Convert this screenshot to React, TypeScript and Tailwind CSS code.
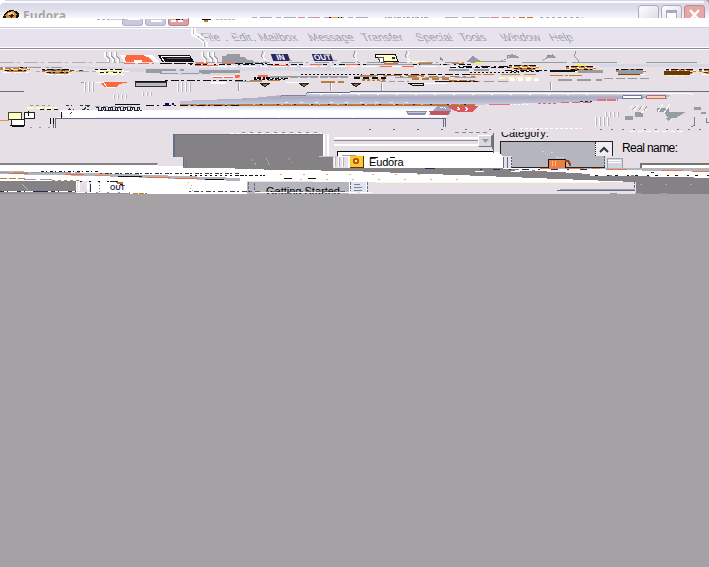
import React from "react";

// x start, x end, y, colour, dash pattern, thickness
type Seg = [number, number, number, string, string?, number?];
const K = "#111115", O = "#ff6642", G = "#969ca2", W = "#ffffff", B = "#c07b36", N = "#636d8b", Y = "#ffffbd";

function Segs({ items }: { items: Seg[] }) {
  return (
    <>
      {items.map(([a, b, y, c, d, w], i) => (
        <path key={i} d={`M${a} ${y + 0.5}H${b}`} stroke={c} strokeWidth={w || 1} strokeDasharray={d} fill="none" />
      ))}
    </>
  );
}

function Art({ y, h, children }: { y: number; h: number; children: React.ReactNode }) {
  return (
    <svg className="pointer-events-none absolute inset-0 block" width="709" height={h} viewBox={`0 ${y} 709 ${h}`} shapeRendering="crispEdges">
      {children}
    </svg>
  );
}

function Ticks({ x, y, n, h = 10, gap = 4 }: { x: number; y: number; n: number; h?: number; gap?: number }) {
  return (
    <>
      {Array.from({ length: n }, (_, i) => (
        <g key={i}>
          <path d={`M${x + i * gap + 0.5} ${y}v${h}`} stroke="#fff" />
          <path d={`M${x + i * gap + 1.5} ${y}v${h}`} stroke="#b5b3bd" />
        </g>
      ))}
    </>
  );
}

function TitleBar() {
  return (
    <header className="relative flex h-[18px] items-start justify-between overflow-hidden rounded-tr-md bg-linear-to-b from-[#d4d4e4] via-[#dedeeb] to-[#f8f8fc]">
      <div className="flex pt-[9px] pl-[3px]">
        <svg width="17" height="14" viewBox="0 0 17 14" shapeRendering="crispEdges">
          <path d="M1 6 4 2 8 1 13 2 16 5 15 11 10 14 3 12 0 9Z" fill="#211200" />
          <path d="M2 6 5 3 10 2 14 5 12 11 5 11Z" fill="#ce8a4a" />
          <path d="M4 5 8 3 12 5 9 7Z" fill="#ffcf94" />
          <path d="M6 6 9 5 11 7 8 9Z" fill="#3a1c00" />
        </svg>
        <span className="pl-[3px] font-['Open_Sans',sans-serif] text-[12px] leading-[14px] font-bold tracking-[0.15px] text-[#a5a5a8]">Eudora</span>
      </div>
      <div className="flex gap-[2px] pt-[5px] pr-[4px]">
        <span className="h-[19px] w-[21px] rounded-[3px] border border-[#a9a9bd] bg-linear-to-br from-white to-[#d7d7e5]" />
        <span className="h-[19px] w-[21px] rounded-[3px] border border-[#a9a9bd] bg-linear-to-br from-white to-[#d7d7e5] pt-[4px] pl-[4px]">
          <span className="block h-[11px] w-[11px] border border-t-[3px] border-[#aaaabd] bg-white" />
        </span>
        <span className="h-[19px] w-[21px] rounded-[3px] border border-[#bd8a94] bg-[#e5a6a6]">
          <svg width="19" height="17"><path d="m5 4 9 10M14 4 5 14" stroke="#fff" strokeWidth="2.4" /></svg>
        </span>
      </div>
      <Art y={0} h={18}>
        <path d="M3 1.5H704" stroke="#f9f9ff" strokeWidth="2" />
        <path d="M0 0h5L0 5ZM704 0h5v5Z" fill="#fff" />
        <Segs items={[[252, 370, 17, "#a7afc4", "5 3 12 4"], [298, 322, 17, "#d88b94", "6 9"], [329, 342, 17, K, "4 2"], [331, 338, 17, "#f1a335"], [385, 428, 17, "#a9a9b2", "2 1 4 2"], [445, 490, 17, "#b3b3bd", "13 4"], [491, 515, 17, "#d88b94", "8 3"], [519, 533, 17, B, "6 2"], [540, 583, 17, "#a9a9b2", "3 3"]]} />
      </Art>
    </header>
  );
}

function GhostButtons() {
  return (
    <div className="relative flex h-[9px] gap-[2px] bg-white pl-[122px]">
      <span className="h-[8px] w-[21px] rounded-b-[3px] border border-t-0 border-[#b0b0c8] bg-[#c9c9dd]" />
      <span className="h-[8px] w-[21px] rounded-b-[3px] border border-t-0 border-[#b0b0c8] bg-[#c9c9dd]" />
      <span className="h-[8px] w-[21px] rounded-b-[3px] border border-t-0 border-[#b8848e] bg-[#dda0a2]" />
      <Art y={18} h={9}>
        <path d="M122 18h66v1h-66Z" fill="#fff" />
        <Segs items={[[97, 126, 19, "#ada9bd", "3 2"], [109, 122, 19, "#ccccdf"], [128, 140, 19, W], [151, 162, 20, W, undefined, 2], [171, 185, 20, W, "5 2", 2], [176, 183, 19, K, "4 2"], [202, 211, 19, K], [204, 208, 20, B, undefined, 2], [216, 235, 19, "#b5b5ba", "3 1"]]} />
      </Art>
    </div>
  );
}

const menus: [string, string][] = [
  ["File", "w-[30px]"], ["Edit", "w-[27px]"], ["Mailbox", "w-[50px]"], ["Message", "w-[53px]"],
  ["Transfer", "w-[54px]"], ["Special", "w-[44px]"], ["Tools", "w-[41px]"], ["Window", "w-[49px]"], ["Help", "w-[30px]"],
];

function MenuBar() {
  return (
    <nav className="relative flex h-[23px] overflow-hidden border-t border-[#cecddb] bg-[#e6e3ef] pt-[1px] pl-[203px]">
      {menus.map(([m, w]) => (
        <span key={m} className={`${w} shrink-0 skew-x-[28deg] font-['Liberation_Sans',sans-serif] text-[11px] leading-[16px] text-[#a39f9f]`}>{m}</span>
      ))}
      <Art y={28} h={22}>
        <path d="M0 28.500H190M0 47.500H202" stroke="#fff" />
        <path d="M191.500 28V33L194 36 200 39 204 43V50M195 28v5l7 4 5 6v7" stroke="#fff" strokeWidth="2" fill="none" />
        <path d="M193.500 29v5M197 36l7 5 1 8" stroke="#b6b4bf" fill="none" />
        <Segs items={[[203, 577, 34, "#e6e3ef", "3 5 2 4"], [203, 577, 39, "#e6e3ef", "2 6 4 3"], [203, 577, 41, "#e6e3ef", "5 4 2 7"], [226, 578, 40, "#b5b2aa", "2 26"], [0, 709, 47, W], [0, 709, 48, "#848b90"], [0, 709, 49, W]]} />
      </Art>
    </nav>
  );
}

function ToolBar() {
  return (
    <div className="relative flex h-[13px] overflow-hidden bg-[#e6dfe6] pt-[4px]">
      <span className="ml-[272px] h-[7px] w-[17px] skew-x-[20deg] overflow-hidden bg-[#292961] text-center font-['Liberation_Sans',sans-serif] text-[8px] leading-[7px] font-bold text-white">IN</span>
      <span className="ml-[24px] h-[7px] w-[19px] skew-x-[20deg] overflow-hidden bg-[#292961] text-center font-['Liberation_Sans',sans-serif] text-[8px] leading-[7px] font-bold text-white">OUT</span>
      <Art y={50} h={13}>
        {[105, 110, 115, 202, 208, 213].map((x) => (
          <g key={x} fill="none"><path d={`M${x} 52v4l3 3v4`} stroke="#fff" strokeWidth="2" /><path d={`M${x + 1.5} 52v4l3 3v4`} stroke="#a6a4aa" /></g>
        ))}
        <path d="M120 55H152L160 62H124Z" fill="#fff" />
        <path d="M126 55H143L150 58 153 62H126l-1-3Z" fill="#ff6642" /><path d="M134 60h8v3h-8Z" fill="#fff" />
        <path d="M158 55H190L194 62H162Z" fill="#111" /><path d="M161 56.500H190M161 57l4 5" stroke="#fff" /><path d="M166 58h24v1h-23Z" fill="#53565a" />
        <path d="M222 56h3l2-2h13v3h4l3 3h5l4 3H222Z" fill="#969ca2" />
        {[262, 354, 406, 575].map((x) => <path key={x} d={`M${x} 51v3l-1 2 2 2 2 2v2`} stroke="#96949a" fill="none" />)}
        {[264, 356, 408].map((x) => <path key={x} d={`M${x} 52v3l-1 2 3 4`} stroke="#fff" fill="none" />)}
        <path d="M375 54h20l3 7h-18l-1-4h-4Z" fill="#ffffbd" stroke="#111" /><path d="M378 57h5v5h-3Z" fill="#fff" stroke="#555" /><path d="M392 57h3v2h-3Z" fill="#292979" />
        <path d="m466 62 7-6 9 6ZM495 62l15-4h10l-3-2-6-2-5 6ZM540 62l8-4h8l-3-4-6 3Z" fill="#969ca2" />
        <path d="M507 58v-3h3m37 2v-2h3m-110 5v-3l3 4" stroke="#858b90" fill="none" />
        <Segs items={[[289, 292, 60, G], [333, 337, 60, G], [0, 125, 62, "#b4b2b7", "14 3 3 4"], [195, 270, 62, G, "9 2"], [289, 475, 62, G, "14 3 2 7"], [407, 426, 61, Y], [474, 506, 61, G], [522, 620, 62, G, "45 5"], [646, 697, 62, G]]} />
      </Art>
    </div>
  );
}

function SmearedIcons() {
  const cups = [[0, 67], [42, 69], [95, 69], [509, 65], [566, 66], [616, 69], [666, 69], [699, 69]];
  return (
    <div className="relative h-[29px] bg-[#e6dfe6]">
      <Art y={63} h={29}>
        <path d="M0 66H65L145 68H235V75H182L64 67H0ZM235 65H348V71H235ZM590 64h119v3H602Z" fill="#d9d7e3" />
        {cups.map(([x, y], i) => (
          <g key={x}>
            <path d={`M${x} ${y + 1}h6l3-1h16l5 2h4v1h-6l-3 2H${x + 8}l-5-2h-3Z`} fill={i === 2 ? Y : "#c27d3c"} />
            <Segs items={[[x, x + 30, y, K, "3 2 7 3"], [x + 3, x + 34, y + 1, W, "2 6"], [x + 3, x + 34, y + 2, i === 2 ? W : "#ffda9b", "6 3"], [x + 5, x + 29, y + 3, i > 4 ? "#673300" : K, "4 2 2 5"], [x + 3, x + 29, y + 5, W, "8 3"]]} />
          </g>
        ))}
        <Segs items={[
          [124, 154, 63, O, "11 3", 1], [160, 193, 63, K, "12 2"], [196, 208, 63, O], [222, 241, 63, O],
          [190, 475, 64, K, "2 3 6 2 4 7"], [200, 475, 66, W, "7 4 16 3"], [310, 393, 64, O, "12 24"], [380, 424, 66, O, "12 10"],
          [271, 289, 65, O], [195, 218, 65, O], [235, 267, 63, K, "8 2"], [384, 464, 63, B, "14 20"], [366, 450, 64, G, "20 7"],
          [450, 510, 67, K, "6 3 5 2"], [458, 510, 66, K, "2 3 9 4"], [449, 489, 69, G, "20 5", 2], [475, 483, 63, "#ffff00"], [576, 585, 64, "#ffff00"],
          [0, 62, 67, G, "3 2 13 5"], [36, 122, 71, "#a2b3c0", "4 8 13 3"], [104, 124, 71, "#eeee70", "2 3"], [146, 184, 69, G, "30 4", 2], [146, 162, 71, G, undefined, 2],
          [199, 240, 71, G, undefined, 3], [160, 210, 73, G, "18 3"], [43, 88, 70, "#654500", "4 5"],
          [212, 238, 76, W], [213, 239, 77, O, "9 2"], [235, 272, 75, O, "5 18 10 5", 2], [278, 300, 76, O],
          [254, 289, 77, K, "2 1 4 2", 2], [254, 286, 79, K, "3 2 2 1"], [270, 350, 76, G, "8 2", 2], [294, 387, 76, G, "22 8"], [301, 362, 74, K, "2 2"],
          [354, 386, 77, K, "6 3", 2], [360, 424, 75, B, "18 5"], [362, 387, 79, B, "3 2", 2], [365, 385, 79, "#ffbd73", "3 4", 1], [370, 475, 74, K, "4 3 8 2"],
          [395, 476, 77, G, "24 6"], [412, 450, 78, B, "7 3", 2], [400, 475, 76, B, "3 5 9 4"], [449, 475, 80, "#b86e26", "8 2", 2], [470, 519, 72, K, "2 2"],
          [470, 495, 74, B, "11 2"], [501, 536, 74, "#bf8b52", "19 4"], [550, 582, 75, B, "13 2 3 1"], [505, 601, 70, K, "7 2 3 3"], [511, 540, 71, K, "3 2"],
          [550, 575, 70, K, undefined, 2], [578, 603, 71, G, undefined, 3], [618, 643, 71, G, undefined, 4], [618, 640, 74, "#844100"],
          [664, 690, 72, "#6c3608", undefined, 4], [667, 684, 75, Y, "5 2"], [604, 649, 78, G, "9 3"], [558, 602, 79, G, "14 5", 2],
          [499, 537, 77, Y, "6 3", 2], [510, 540, 79, W, "5 3", 2], [470, 510, 81, G, "10 4"],
          [435, 478, 81, K, "17 2"], [415, 447, 83, W], [250, 286, 80, B, "12 6"], [321, 344, 81, B, "14 3", 2], [380, 409, 81, G, "6 3"],
          [235, 262, 81, G], [286, 309, 82, W], [135, 167, 81, K], [165, 246, 80, K, "3 3 8 2"], [211, 226, 82, W, undefined, 2],
          [81, 84, 82, G], [0, 24, 91, N],
        ]} />
        <path d="M99 82H129L120 84 116 87H104Z" fill="#ff6642" /><path d="M95 82h8l4 5h8" stroke="#fff" fill="none" />
        <path d="M135 82h31v4h-31Z" fill="#b9b7bf" stroke="#333" />
        <Ticks x={84} y={82} n={3} /><Ticks x={177} y={82} n={4} />
        {[260, 299, 351].map((x) => <path key={x} d={`M${x} 83h10l-4 3h-2Z`} fill="#9b622c" stroke="#222" />)}
        <path d="M408 83h15v2h-11Z" fill="#ffda9b" stroke="#111" />
        {[238, 330, 381, 550].map((x) => <g key={x}><path d={`M${x}.500 ${x === 550 ? 82 : 83}v8`} stroke="#9b999f" /><path d={`M${x + 1.5} 83v7`} stroke="#fff" /></g>)}
        <path d="M350 91.500H709" stroke="#636d8b" />
      </Art>
    </div>
  );
}

function TornWindow() {
  return (
    <div className="relative h-[40px] bg-[#e6dfe6]">
      <Art y={92} h={40}>
        <defs>
          <linearGradient id="steel" x1="0" y1="0" x2="0" y2="1"><stop offset="0" stopColor="#dedde9" /><stop offset=".35" stopColor="#a9aac1" /><stop offset="1" stopColor="#c9cbdf" /></linearGradient>
          <linearGradient id="sheet" x1="0" y1="0" x2="0" y2="1"><stop offset="0" stopColor="#cdd2e3" /><stop offset=".5" stopColor="#fff" /><stop offset="1" stopColor="#fff" /></linearGradient>
        </defs>
        <path d="M306 95.500V93.500L308 92.500H350" stroke="#636d8b" fill="none" />
        <path d="M305 96V94l5-1H664l7 3-4 1-55 2-24 3-88 2-30 1H180V101l74-3 26-3Z" fill="url(#steel)" />
        <path d="M309 93.500H690L694 95" stroke="#fff" fill="none" />
        <path d="M280 97l2-2h24" stroke="#7e829e" fill="none" />
        <path d="M180 105H470V107L446 109V117H66L60 114V110H180Z" fill="url(#sheet)" />
        <Segs items={[
          [180, 475, 104, B, "17 2 8 1"], [190, 475, 105, "#b77539"], [260, 475, 104, "#282d3c", "2 15"], [285, 420, 102, "#eeeef8", "3 12"], [320, 600, 94, W, "2 17"],
          [146, 240, 105, K, "8 3 2 4"], [98, 142, 110, "#292929", "3 3"], [95, 135, 106, G, "5 3"], [115, 140, 104, K],
          [165, 174, 103, "#000b79", "4 3", 2], [30, 50, 105, G, "3 3"], [27, 57, 107, Y, "7 2", 2], [40, 61, 109, K, "4 3"],
          [489, 510, 104, "#e37078"], [510, 530, 104, W, "2 2"], [538, 558, 103, "#d66974", "3 2"], [561, 593, 102, "#d66974", "8 3"], [580, 592, 101, "#252b44", "3 2"],
          [597, 618, 99, "#e37078", "9 1", 2], [57, 442, 117, W], [55, 446, 118, N], [95, 440, 117, "#f0edf4", "35 2"],
        ]} />
        {[96, 103, 110, 118, 125, 132].map((x) => <path key={x} d={`M${x} 107h2v3h3v-3l3 1-1 2h-2`} stroke="#1e2436" fill="none" />)}
        <path d="M66 105h6l-3 4h5l-4 5M80 105h10l-6 4h5" stroke="#343642" strokeDasharray="3 2" fill="none" />
        <path d="M53.500 119V128M55.500 119v9M443.500 118V127M445.500 118v9" stroke="#636d8b" />
        <path d="M406 111h21l-2 4h-17Z" fill="#888caf" /><path d="M408 112h17" stroke="#c2c5dd" />
        <path d="m429 115 3-4 5-5h14v5l-2 4Z" fill="#9ea3bb" /><path d="M429 111h21l-2 4h-17Z" fill="#c55462" />
        <path d="M447 106h31l-5 6h-15l-5-2Z" fill="#dc5660" /><path d="m457 107 3 2-3 1m8-3 3 2-3 2m-25-3 4-1 2 2" stroke="#fff" strokeDasharray="3 1" fill="none" />
        <path d="M622 98c0-3 2-3 4-3h13c2 0 3 1 3 3Z" fill="#fff" stroke="#71799a" /><path d="M646 98c0-3 2-3 4-3h13c2 0 3 1 3 3Z" fill="#ffd1ac" stroke="#b46c76" />
        <path d="M8 112h13v7H8Z" fill="#ffffbd" stroke="#444" /><path d="M24 112h10v6H24ZM11 119h13v6H11Z" fill="#fff" stroke="#222" /><path d="M10 125h15M28 111v5M50 118v6m3-6v6M61 112v6" stroke="#111" /><path d="M0 120h9" stroke="#e09645" />
        <Ticks x={142} y={92} n={3} h={4} /><Ticks x={113} y={95} n={4} h={4} />
        <Ticks x={595} y={117} n={4} h={9} /><Ticks x={605} y={112} n={4} h={5} />
        <path d="M625 116h8v4h-8Zm10-4h8v5h-8Zm22-4h12v4h-12Zm7 4h22l-10 6h-8Zm2 6h5l-3 3Zm28-11h7v3h-7Zm7 5h5v2h-5Z" fill="#969ca2" />
        <path d="m629 109 4-4m1 6 4-6m1 6 5-6m-3 8 6-4m16-5-5 8m12-8-6 9" stroke="#fff" />
        <path d="m632 110 4-4m2 5 4-5m2 5 3-5" stroke="#aaa8ae" />
        <path d="M694.500 117v8l-3 2M706 118v4h3" stroke="#77808c" fill="none" />
        <Segs items={[[369, 560, 129, "#636d8b", "2 22"], [520, 582, 128, W, "3 2"], [600, 709, 129, "#727785", "2 9"], [12, 24, 126, K], [30, 55, 127, G, "2 7"], [630, 684, 131, W, "5 3"]]} />
      </Art>
    </div>
  );
}

function Panels() {
  return (
    <section className="relative flex h-[36px] overflow-hidden bg-[#e6dfe6] font-['Liberation_Sans',sans-serif]">
      <div className="mt-[31px] h-[5px] w-[158px] border-t-2 border-r border-[#848284] border-r-white bg-white" />
      <div className="ml-[15px] mt-[2px] h-[34px] w-[151px] border-t border-l border-[#636d8b] border-t-[#77736e] bg-[#848284]" />
      <div className="ml-[10px] flex w-[159px] flex-col">
        <div className="mt-[3px] flex h-[14px] items-start justify-between border-r border-[#77757a]">
          <div className="mt-[2px] h-[9px] flex-1 border-y-2 border-t-white border-b-white"><div className="h-[2px] border-b border-[#8d8a91]" /></div>
          <div className="flex h-[12px] w-[14px] items-center justify-center border border-t-white border-l-white border-r-[#77757a] border-b-[#77757a] bg-[#dad7dd]">
            <svg width="7" height="4"><path d="M0 0h7L3.500 4Z" fill="#969ca2" /></svg>
          </div>
        </div>
        <div className="mt-[2px] ml-[3px] flex h-[17px] border-t border-l border-black bg-white pt-[4px] pl-[12px]">
          <svg className="shrink-0" width="14" height="12" shapeRendering="crispEdges"><path d="M0 0h13v11H0Z" fill="#ffc62d" /><path d="M13 0v11H0" stroke="#5b3415" fill="none" /><circle cx="6" cy="5" r="3" fill="#b75b10" /><path d="M5 4h2v2H5Z" fill="#fff1a0" /></svg>
          <span className="ml-[5px] text-[11px] leading-[12px] tracking-[-0.15px] text-black">Eudora</span>
        </div>
      </div>
      <div className="ml-[7px] flex w-[113px] flex-col">
        <span className="-mt-[6px] h-[15px] pl-[1px] text-[11px] leading-[14px] text-black">Category:</span>
        <div className="mt-[1px] flex h-[27px] border border-[#222] bg-[#b5b5bd]">
          <div className="flex-1 pt-[16px] pl-[46px]">
            <svg width="25" height="10" shapeRendering="crispEdges"><path d="M1 1h17v9H1Z" fill="#e98143" stroke="#111" /><path d="M18 3h3l2 3v2" stroke="#9b3e16" strokeWidth="2" fill="none" /><path d="M5 3v5M8 3v5" stroke="#ffc099" /></svg>
          </div>
          <div className="flex h-[14px] w-[17px] items-center justify-center border-l border-dotted border-[#222] bg-[#efedf3]"><svg width="10" height="7"><path d="m1 6 4-4 4 4" stroke="#333" strokeWidth="2" fill="none" /></svg></div>
        </div>
      </div>
      <div className="flex flex-1 flex-col pl-[9px]">
        <span className="mt-[9px] h-[15px] whitespace-nowrap text-[12px] leading-[15px] tracking-[-0.6px] text-black">Real name:</span>
        <div className="mt-[7px] ml-[18px] h-[6px] border-t-2 border-l-2 border-[#77736e] bg-white" />
      </div>
      <Art y={132} h={36}>
        <path d="M171 134h2v23h10v11h-12Z" fill="#e6dfe6" />
        <path d="M174.500 134v23M183.500 157v10" stroke="#636d8b" /><path d="M186.500 158v9" stroke="#77787f" />
        <path d="M323 134h2v22h-2ZM327 134h2v22h-2ZM493 152h6l4 5v11h-10Z" fill="#fff" /><path d="M493.500 133v20" stroke="#636d8b" />
        <path d="M158 166h25v2h-25Z" fill="#fff" />
        <path d="M323 156h11v12h-11Z" fill="#848284" /><path d="M333 157h15v11h-15Z" fill="#e6dfe6" /><Ticks x={334} y={157} n={3} h={10} />
        <path d="M503 156h9v12h-9Z" fill="#e6dfe6" />
        <path d="M503.500 157v11M507.500 157v11" stroke="#636d8b" />
        <path d="M605 156h8v12h-8Z" fill="#e6dfe6" />
        <Segs items={[[230, 322, 133, W, "4 2"], [242, 322, 132, "#878994", "3 5"], [455, 490, 132, "#878994", "4 3"], [319, 338, 156, "#c8c6cc"], [342, 358, 155, G], [356, 367, 155, Y, "4 1"], [370, 378, 157, K], [390, 395, 157, K]]} />
        <path d="m251 159 7 8m8-9 4 8m18-8 5 5" stroke="#adabb0" strokeDasharray="3 2" />
        <path d="m542 151 6 4m1-5 5 4m2 3h9" stroke="#d6d6da" strokeDasharray="2 1" />
        <path d="M511.500 157v11M604.500 156v12" stroke="#555c6e" strokeDasharray="2 1" fill="none" />
        <path d="M607 158h15v10h-15Z" fill="#d4d3e1" stroke="#9ca0b0" /><path d="M608 160h13M608 162h13" stroke="#fff" />
      </Art>
    </section>
  );
}

function ShearedRows() {
  return (
    <section className="relative flex h-[26px] overflow-hidden bg-[#e6dfe6] font-['Liberation_Sans',sans-serif]">
      <div className="h-[26px] w-[247px] bg-white" />
      <div className="mt-[14px] h-[12px] w-[102px] overflow-hidden bg-[#b5b5bd] pt-[2px] pl-[19px] text-[11px] leading-[14px] whitespace-nowrap text-black">Getting Started</div>
      <div className="mt-[14px] h-[12px] w-[18px] border-x border-white bg-[#e1e4ef]" />
      <Art y={168} h={26}>
        <path d="M0 168H709V178L636 181V182H376L250 181H0Z" fill="#fff" />
        <path d="M350 168H495L590 174 709 178V194H636V182L560 179 470 175.500 350 171 235 169V168Z" fill="#848284" />
        <path d="M0 171 95 173 240 178V181L95 176 0 174ZM620 168h89v4L620 170Z" fill="#b5b4bd" />
        <path d="M503 168H606L709 171V169H600Z" fill="#b5b4bd" />
        <path d="M0 181H76V191H0Z" fill="#848284" />
        <path d="M0 192H130V194H0Z" fill="#949294" />
        <path d="M77 181H91V192H77Z" fill="#e6dfe6" /><path d="M79 182v9m9-9v9" stroke="#fff" strokeWidth="2" /><path d="M90 184v8" stroke="#333" /><path d="M99.500 182v10" stroke="#777" strokeDasharray="1 2" />
        <path d="m22 184 6 6" stroke="#bbb8bc" /><path d="M188 182l4 4-2 2 3 3" stroke="#d9a65d" strokeDasharray="2 2" fill="none" />
        <path d="M115 182h8v2h-5Z" fill="#ad7330" /><path d="M110 181.500h8M120 184h3" stroke="#222" />
        <Segs items={[
          [0, 80, 172, G, "9 4 16 2"], [9, 28, 173, "#e56c35"], [41, 100, 171, K, "3 2 1 3"], [100, 240, 173, "#38353c", "2 3 4 1"], [65, 84, 174, "#e56c35"],
          [95, 109, 175, "#f07842"], [118, 142, 176, K], [147, 170, 177, "#e56c35"], [175, 198, 178, "#dc7137"], [205, 224, 179, K], [190, 265, 175, K, "2 3"],
          [0, 27, 178, B, "7 2"], [24, 54, 179, G, "12 4"], [52, 79, 180, "#c37f3d", "3 3"], [80, 117, 181, K, "2 7"],
          [235, 265, 175, K, "4 3 2 5"], [284, 318, 178, K, "8 16"], [280, 420, 174, "#e2b16d", "2 21"], [300, 475, 179, "#deb175", "2 24"],
          [0, 76, 191, "#313136", "4 3 1 9"], [76, 130, 192, W, "9 2"], [33, 48, 191, "#292961"], [133, 147, 193, B, "5 1"], [189, 250, 191, "#444", "2 3 5 2"], [250, 352, 191, "#666", "2 3 5 7"], [255, 372, 192, W, "32 3"],
          [376, 600, 182, "#fff7dc"], [560, 635, 189, G], [557, 635, 190, N], [610, 670, 193, G, "7 18"], [640, 709, 184, "#aaa7ad", "2 23"],
          [515, 565, 170, W, "17 7"], [540, 600, 168, "#e57b40", "18 8"], [606, 627, 169, "#e57b40"], [620, 660, 172, "#333", "3 5 7 6"], [570, 709, 171, W, "25 3", 2], [590, 709, 174, W, "19 3", 2], [661, 683, 170, "#e57b40"], [692, 709, 171, "#e57b40"], [595, 709, 175, K, "3 9 2 6"], [650, 700, 176, "#fff", "14 6"], [480, 590, 169, "#292961", "2 11 7 9"], [475, 590, 171, W, "9 27"], [425, 435, 168, "#292961"],
        ]} />
        <path d="M248 182v10M254 183v8M350 182v9M367.500 182v10M634.500 181v8" stroke="#636d8b" strokeDasharray="3 1" />
        <path d="M354 184h6m-6 3h8m-8 3h8" stroke="#77849b" />
      </Art>
      <span className="absolute top-[15px] left-[110px] h-[9px] w-[18px] text-[7px] leading-[9px] font-bold text-[#292961]">OUT</span>
    </section>
  );
}

export default function App() {
  return (
    <main className="flex h-[567px] w-[709px] flex-col overflow-hidden bg-[#a5a2a5]">
      <TitleBar />
      <GhostButtons />
      <MenuBar />
      <ToolBar />
      <SmearedIcons />
      <TornWindow />
      <Panels />
      <ShearedRows />
      <div className="flex-1 bg-[#a5a2a5]" />
    </main>
  );
}
